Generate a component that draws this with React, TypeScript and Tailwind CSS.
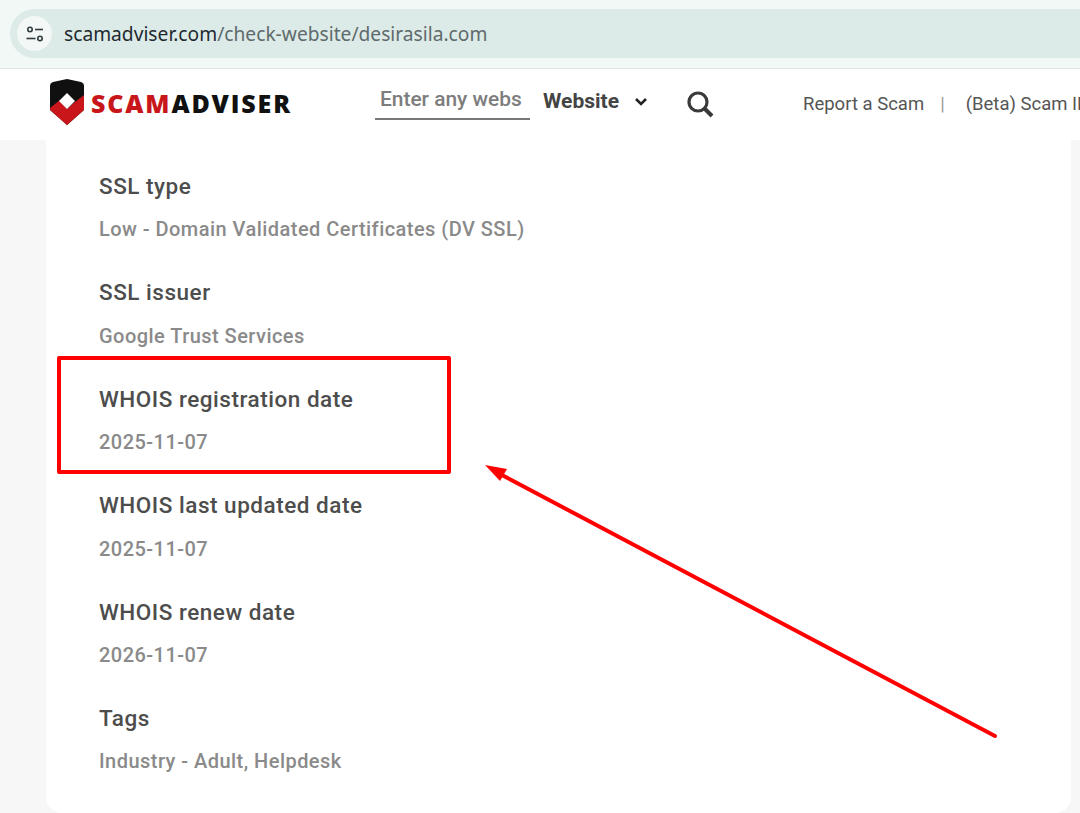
import React from "react";

const rows = [
  ["SSL type", "Low - Domain Validated Certificates (DV SSL)"],
  ["SSL issuer", "Google Trust Services"],
  ["WHOIS registration date", "2025-11-07"],
  ["WHOIS last updated date", "2025-11-07"],
  ["WHOIS renew date", "2026-11-07"],
  ["Tags", "Industry - Adult, Helpdesk"],
];

function Row({ title, value }: { title: string; value: string }) {
  return (
    <div className="h-[106.4px]">
      <div className="text-[22.5px] leading-[30px] tracking-[0.52px] font-medium text-[#4d4d4d]">{title}</div>
      <div className="mt-[13.4px] text-[20px] leading-[30px] tracking-[0.46px] font-medium text-[#8a8a8a]">{value}</div>
    </div>
  );
}

export default function App() {
  return (
    <div className="relative w-[1080px] h-[813px] overflow-hidden bg-[#f7f7f7] font-['Roboto',sans-serif]">
      <div className="h-[69px] bg-[#f2f8f6] border-b border-[#dde6e3] flex items-center pl-[10px]">
        <div className="flex items-center w-[1070px] h-[49px] rounded-l-full bg-[#dcebe7] pl-[7px] mt-[-1px]">
          <div className="w-[35px] h-[35px] rounded-full bg-[#f3f8f6] flex items-center justify-center">
            <svg width="20" height="20" viewBox="0 0 20 20" fill="none" stroke="#2f3a3d" strokeWidth="1.6">
              <circle cx="5" cy="5.5" r="2.2" />
              <path d="M10 5.5h8" />
              <path d="M1.5 14.5h9" />
              <circle cx="15" cy="14.5" r="2.2" />
            </svg>
          </div>
          <div className="ml-[12px] mt-[1px] text-[19.2px] font-['Noto_Sans',sans-serif] text-[#5f6a6d]">
            <span className="text-[#1f2a30]">scamadviser.com</span>/check-website/desirasila.com
          </div>
        </div>
      </div>

      <div className="h-[71px] bg-white flex items-start overflow-hidden">
        <div className="ml-[49px] mt-[9px] w-[36px] h-[48px] shrink-0">
          <svg width="36" height="48" viewBox="0 0 36 48">
            <path d="M1 8 Q1 5 4 4 L18 1 L32 4 Q35 5 35 8 V32 L18 47 L1 32 Z" fill="#101010" />
            <path d="M1 30 L11 22 L18 31 L26 24 L35 17 V32 L18 47 L1 32 Z" fill="#c8161b" />
            <path d="M18 15 L26 23 L18 31 L10 23 Z" fill="#ffffff" />
          </svg>
        </div>
        <div className="ml-[6px] mt-[15px] w-[200px] shrink-0 text-[25px] leading-[38px] font-extrabold tracking-[1.85px] font-['Open_Sans',sans-serif] whitespace-nowrap">
          <span className="text-[#c8161b]">SCAM</span>
          <span className="text-[#111111]">ADVISER</span>
        </div>
        <div className="ml-[84px] mt-[15px] w-[155px] shrink-0 h-[36px] border-b-2 border-[#777777] pl-[5px] text-[20.9px] leading-[31px] font-medium text-[#7d7d7d] whitespace-nowrap">
          Enter any webs
        </div>
        <div className="ml-[13px] mt-[17px] shrink-0 text-[21px] leading-[31px] font-bold text-[#444444]">Website</div>
        <svg className="ml-[15px] mt-[28px] shrink-0" width="14" height="10" viewBox="0 0 14 10" fill="none" stroke="#222222" strokeWidth="2.6">
          <path d="M2 2l5 5 5-5" />
        </svg>
        <svg className="ml-[39px] mt-[22px] shrink-0" width="27" height="27" viewBox="0 0 27 27" fill="none" stroke="#3a3a3a" strokeWidth="3.2">
          <circle cx="11" cy="11" r="9" />
          <path d="M17.5 17.5L25 25" strokeWidth="4" />
        </svg>
        <div className="ml-[89px] mt-[20px] shrink-0 text-[18.5px] leading-[30px] text-[#555555] whitespace-nowrap flex">
          <span>Report a Scam</span>
          <span className="ml-[16px] text-[#999999]">|</span>
          <span className="ml-[21px]">(Beta) Scam ID</span>
        </div>
      </div>

      <div className="ml-[46px] w-[1025px] h-[673px] bg-white rounded-b-[16px] pl-[53px] pt-[31px]">
        {rows.map((r) => (
          <Row key={r[0]} title={r[0]} value={r[1]} />
        ))}
      </div>

      <div className="absolute left-[57px] top-[356px] w-[394px] h-[118px] border-[4px] border-[#ff0000] rounded-[2px]" />
      <svg className="absolute left-[470px] top-[450px]" width="540" height="300" viewBox="0 0 540 300" fill="none">
        <path d="M525 286 L30 24" stroke="#ff0000" strokeWidth="4" strokeLinecap="round" />
        <path d="M15 15 L37 19 L30 31 Z" fill="#ff0000" />
      </svg>
    </div>
  );
}
